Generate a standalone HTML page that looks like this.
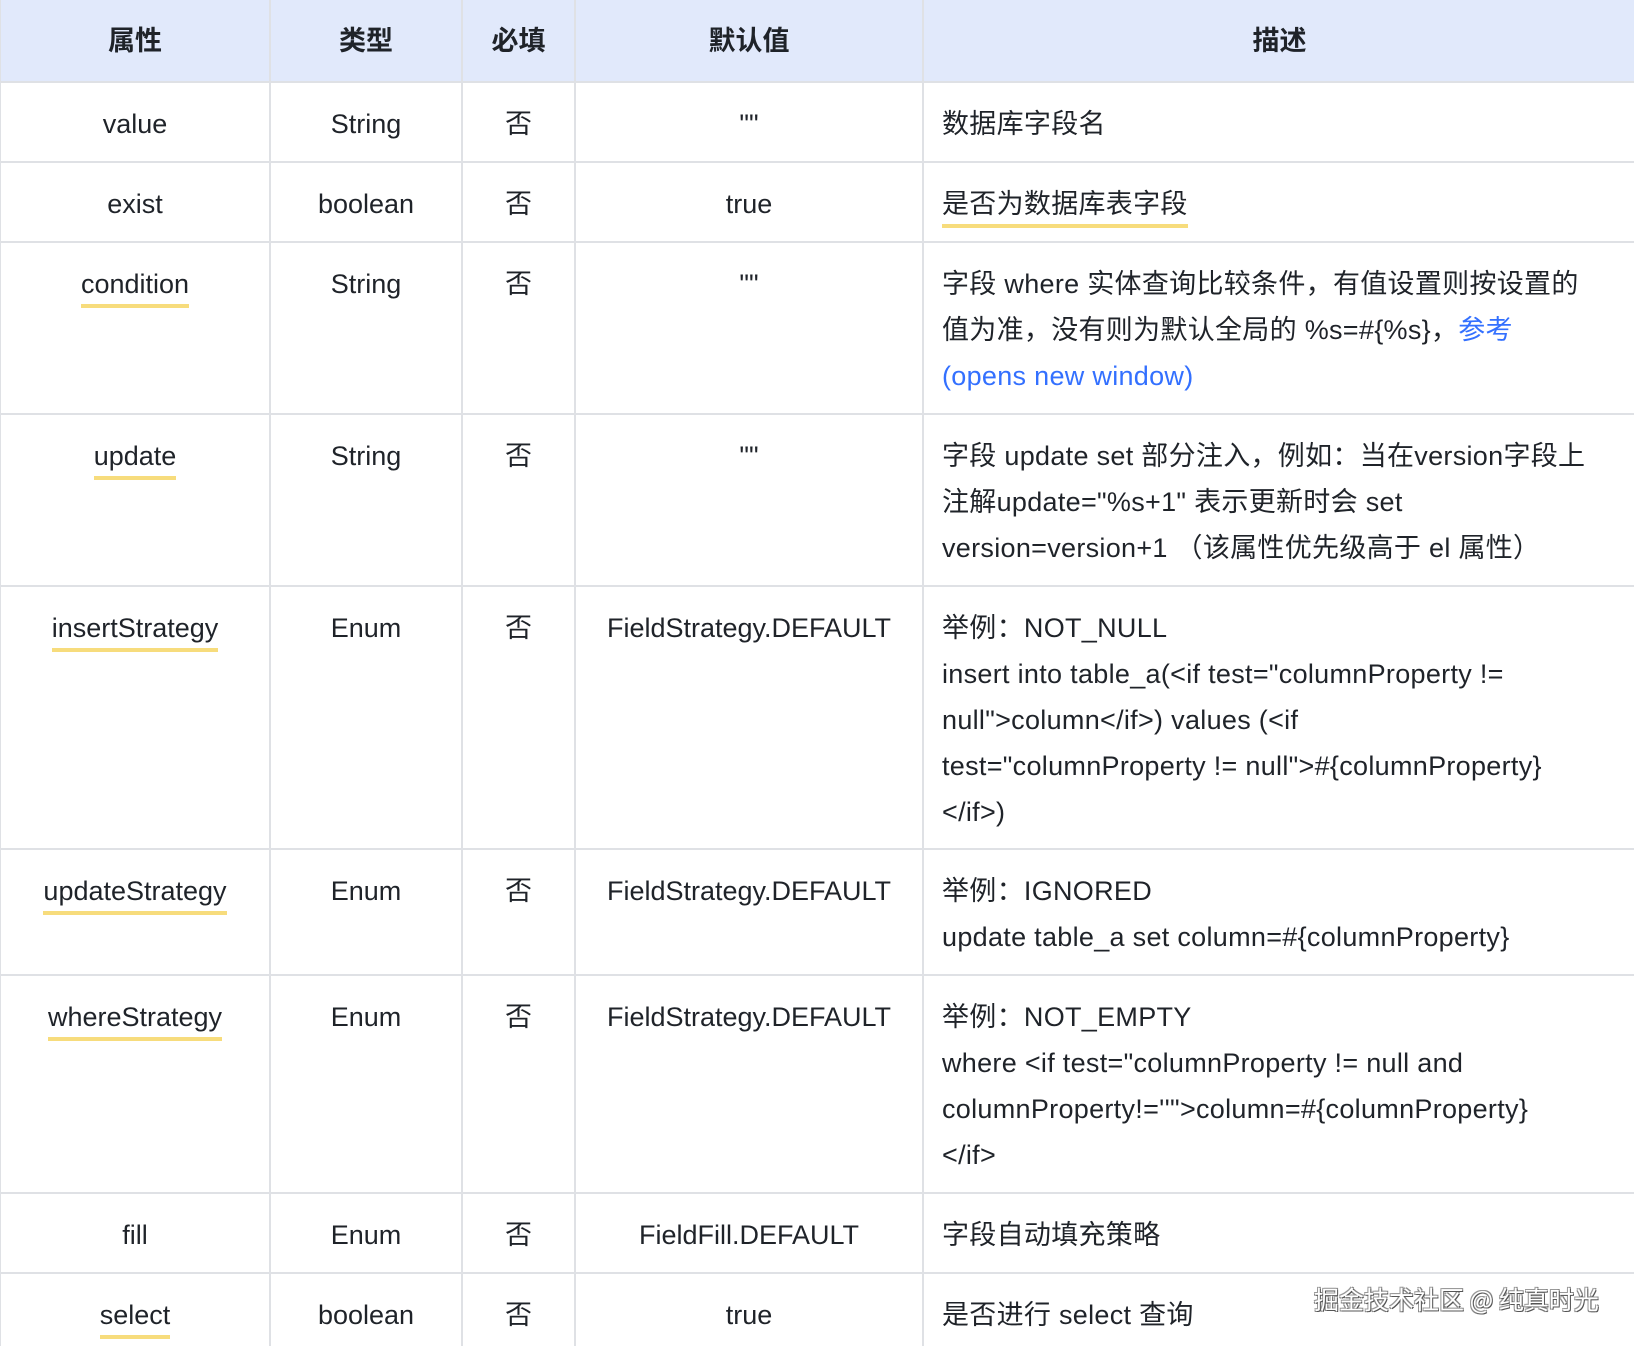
<!DOCTYPE html>
<html><head><meta charset="utf-8"><style>
html,body{margin:0;padding:0;background:#fff;width:1634px;height:1346px;overflow:hidden}
body{font-family:"Liberation Sans","Noto Sans CJK SC",sans-serif;color:#1f2329;font-size:27px}
#w{position:relative;width:1634px;height:1346px;overflow:hidden}
table{border-collapse:collapse;table-layout:fixed;width:1636px;position:absolute;left:-1px;top:0}
td,th{border:2px solid #dfe1e5;vertical-align:top;padding:18px 18px 0 18px;line-height:46px;text-align:center}
th{background:#e1e9fb;font-weight:bold;vertical-align:middle;padding:0;height:81px;border-top:none}
td.d{text-align:left;white-space:nowrap;letter-spacing:0.3px}
.u{border-bottom:4px solid #f7dc7c;line-height:40px;display:inline-block}
a{color:#3370ff;text-decoration:none}
.sig{position:absolute;left:1314px;top:1281px;font-size:25px;color:#fff;text-shadow:1px 1px 0 #555,-1px -1px 0 #999,1px -1px 0 #888,-1px 1px 0 #888;font-family:"Noto Sans CJK SC",sans-serif}
</style></head><body><div id="w">
<table>
<colgroup><col style="width:270px"><col style="width:192px"><col style="width:113px"><col style="width:348px"><col style="width:713px"></colgroup>
<tr><th>属性</th><th>类型</th><th>必填</th><th>默认值</th><th>描述</th></tr>
<tr style="height:80px"><td>value</td><td>String</td><td>否</td><td>""</td><td class="d">数据库字段名</td></tr>
<tr style="height:80px"><td>exist</td><td>boolean</td><td>否</td><td>true</td><td class="d"><span class="u">是否为数据库表字段</span></td></tr>
<tr style="height:172px"><td><span class="u">condition</span></td><td>String</td><td>否</td><td>""</td><td class="d">字段 where 实体查询比较条件，有值设置则按设置的<br>值为准，没有则为默认全局的 %s=#{%s}，<a>参考<br>(opens new window)</a></td></tr>
<tr style="height:172px"><td><span class="u">update</span></td><td>String</td><td>否</td><td>""</td><td class="d">字段 update set 部分注入，例如：当在version字段上<br>注解update="%s+1" 表示更新时会 set<br>version=version+1 （该属性优先级高于 el 属性）</td></tr>
<tr style="height:263px"><td><span class="u">insertStrategy</span></td><td>Enum</td><td>否</td><td>FieldStrategy.DEFAULT</td><td class="d">举例：NOT_NULL<br>insert into table_a(&lt;if test="columnProperty !=<br>null"&gt;column&lt;/if&gt;) values (&lt;if<br>test="columnProperty != null"&gt;#{columnProperty}<br>&lt;/if&gt;)</td></tr>
<tr style="height:126px"><td><span class="u">updateStrategy</span></td><td>Enum</td><td>否</td><td>FieldStrategy.DEFAULT</td><td class="d">举例：IGNORED<br>update table_a set column=#{columnProperty}</td></tr>
<tr style="height:218px"><td><span class="u">whereStrategy</span></td><td>Enum</td><td>否</td><td>FieldStrategy.DEFAULT</td><td class="d">举例：NOT_EMPTY<br>where &lt;if test="columnProperty != null and<br>columnProperty!=''"&gt;column=#{columnProperty}<br>&lt;/if&gt;</td></tr>
<tr style="height:80px"><td>fill</td><td>Enum</td><td>否</td><td>FieldFill.DEFAULT</td><td class="d">字段自动填充策略</td></tr>
<tr style="height:120px"><td><span class="u">select</span></td><td>boolean</td><td>否</td><td>true</td><td class="d">是否进行 select 查询</td></tr>
</table>
<div class="sig">掘金技术社区 @ 纯真时光</div>
</div></body></html>
